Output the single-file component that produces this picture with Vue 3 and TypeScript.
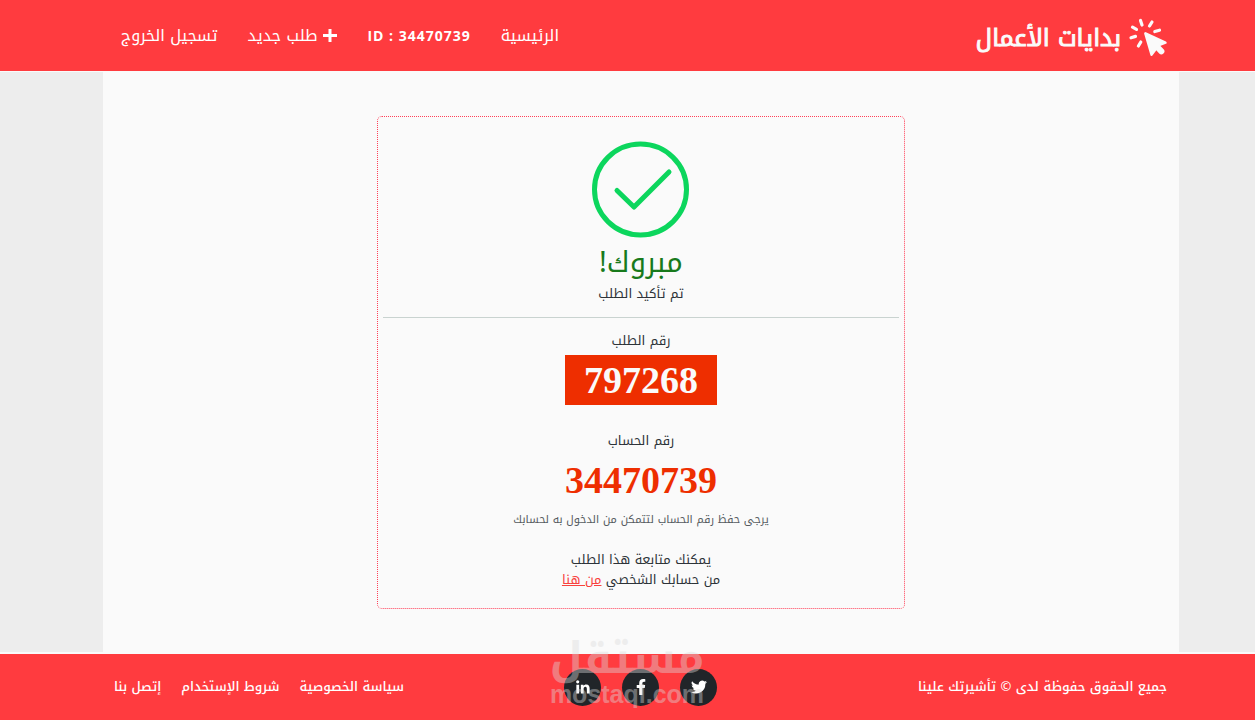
<script setup lang="ts">
interface NavLink {
  label: string
  plus?: boolean
  latin?: boolean
}

const navLinks: NavLink[] = [
  { label: 'الرئيسية' },
  { label: 'ID : 34470739', latin: true },
  { label: 'طلب جديد', plus: true },
  { label: 'تسجيل الخروج' },
]

const footerLinks: string[] = ['سياسة الخصوصية', 'شروط الإستخدام', 'إتصل بنا']

const orderNumber = '797268'
const accountNumber = '34470739'
</script>

<template>
  <div class="page" dir="rtl">
    <header class="header">
      <a class="brand" href="#">
        <svg class="brand-icon" viewBox="0 0 40 40" aria-hidden="true">
          <path
            d="M12.5 2.5L14 7M24 4L21.5 8M31.5 12.2L26.8 13.5M4.5 9.2L8.5 11.4M3 19.8L7.5 18.4M12.8 24L10.4 28"
            fill="none"
            stroke="#fafafa"
            stroke-width="3.2"
            stroke-linecap="round"
          />
          <path
            d="M17.4 15.4L37.4 24.6L30.4 27.4L23.6 36.6Z"
            fill="#fafafa"
            stroke="#fafafa"
            stroke-width="2.6"
            stroke-linejoin="round"
          />
          <path d="M27 26.5L33.4 33.4" stroke="#fafafa" stroke-width="6" stroke-linecap="round" />
        </svg>
        <span class="brand-name">بدايات الأعمال</span>
      </a>
      <nav class="nav">
        <a v-for="link in navLinks" :key="link.label" class="nav-link" :class="{ latin: link.latin }" href="#">
          <svg v-if="link.plus" class="plus" viewBox="0 0 14 14" aria-hidden="true">
            <path d="M7 0v13M0 6.500h14" stroke="#fff" stroke-width="3" />
          </svg>
          <bdi>{{ link.label }}</bdi>
        </a>
      </nav>
    </header>

    <main class="main">
      <section class="card">
        <svg class="check" viewBox="0 0 98 98" aria-hidden="true">
          <ellipse cx="48.5" cy="48.5" rx="46" ry="45.4" fill="none" stroke="#0cd65d" stroke-width="5" />
          <path
            d="M25 49.5L42 66L77 31"
            fill="none"
            stroke="#0cd65d"
            stroke-width="5"
            stroke-linecap="round"
            stroke-linejoin="round"
          />
        </svg>
        <h1 class="title">مبروك!</h1>
        <p class="text">تم تأكيد الطلب</p>
        <hr class="rule" />
        <p class="text">رقم الطلب</p>
        <strong class="number badge">{{ orderNumber }}</strong>
        <p class="text">رقم الحساب</p>
        <strong class="number account">{{ accountNumber }}</strong>
        <p class="note">يرجى حفظ رقم الحساب لتتمكن من الدخول به لحسابك</p>
        <p class="text follow">
          يمكنك متابعة هذا الطلب<br />
          من حسابك الشخصي <a class="here" href="#">من هنا</a>
        </p>
      </section>
    </main>

    <footer class="footer">
      <p class="rights">جميع الحقوق حفوظة لدى © تأشيرتك علينا</p>
      <div class="social">
        <a class="social-link" href="#" aria-label="Twitter">
          <svg viewBox="0 0 24 24" width="16" height="16">
            <path
              fill="#fff"
              d="M24 4.6a10 10 0 0 1-2.8.8 5 5 0 0 0 2.1-2.7 10 10 0 0 1-3.1 1.2 4.9 4.9 0 0 0-8.4 4.5A14 14 0 0 1 1.7 3.2a4.9 4.9 0 0 0 1.5 6.6 4.9 4.9 0 0 1-2.2-.6 4.9 4.9 0 0 0 3.9 4.9 5 5 0 0 1-2.2.1 4.9 4.9 0 0 0 4.6 3.4A9.9 9.9 0 0 1 0 19.5a14 14 0 0 0 21.5-12.4A10 10 0 0 0 24 4.6z"
            />
          </svg>
        </a>
        <a class="social-link" href="#" aria-label="Facebook">
          <svg viewBox="0 0 320 512" width="18" height="16">
            <path
              fill="#fff"
              d="M279 288l14-93h-89v-60c0-25 12-50 52-50h41V7s-37-7-72-7c-73 0-121 44-121 125v70H23v93h81v224h100V288z"
            />
          </svg>
        </a>
        <a class="social-link" href="#" aria-label="LinkedIn">
          <svg viewBox="0 0 24 24" width="14" height="14">
            <circle cx="2.9" cy="3.2" r="2.7" fill="#fff" />
            <path
              fill="#fff"
              d="M.6 8h4.8v15H.6zM8.3 8h4.5v2.1c.9-1.5 2.5-2.5 4.7-2.5 4.6 0 5.9 2.9 5.9 7.2V23h-4.8v-7.4c0-2.2-.4-3.9-2.5-3.9-2.2 0-3 1.6-3 3.9V23H8.3z"
            />
          </svg>
        </a>
        <div class="watermark" aria-hidden="true">
          <span class="mark-ar">مستقل</span>
          <span class="mark-en" dir="ltr">mostaql.com</span>
        </div>
      </div>
      <nav class="footer-nav">
        <a v-for="label in footerLinks" :key="label" class="footer-link" href="#">{{ label }}</a>
      </nav>
    </footer>
  </div>
</template>

<style>
body {
  margin: 0;
  background: #fafafa;
}
</style>

<style scoped>
.page {
  display: flex;
  flex-direction: column;
  min-height: 100vh;
  background: #fafafa;
  color: #2d3338;
  font-family: 'Noto Kufi Arabic', 'Droid Arabic Kufi', 'Noto Sans', 'Noto Sans Arabic', 'DejaVu Sans', sans-serif;
  font-size: 13px;
}

a {
  color: inherit;
  text-decoration: none;
}

p,
h1 {
  margin: 0;
}

.header,
.footer {
  display: flex;
  align-items: center;
  justify-content: space-between;
  box-sizing: border-box;
  background: #ff3b3f;
  color: #fff;
}

.header {
  height: 71px;
  padding: 4px 87px 0 121px;
}

.brand {
  display: flex;
  align-items: center;
  gap: 7px;
}

.brand-icon {
  width: 40px;
  height: 40px;
}

.brand-name {
  color: #fafafa;
  font-size: 24px;
  font-weight: 400;
  -webkit-text-stroke: 1px #fafafa;
}

.nav {
  display: flex;
  gap: 30px;
  padding-bottom: 4px;
}

.nav-link {
  display: flex;
  align-items: center;
  gap: 6px;
  font-size: 16px;
}

.latin {
  font-family: 'Open Sans', sans-serif;
  font-size: 14px;
  font-weight: 700;
  letter-spacing: 1px;
}

.plus {
  width: 14px;
  height: 14px;
}

.main {
  display: flex;
  flex: 1;
  align-items: flex-start;
  justify-content: center;
  margin: 1px 0 2px;
  padding-top: 44px;
  border: 0 solid #ededed;
  border-right-width: 76px;
  border-left-width: 103px;
}

.card {
  display: flex;
  flex-direction: column;
  align-items: center;
  box-sizing: border-box;
  width: 49%;
  padding: 24px 5px 18px;
  border: 1px dotted #ff4058;
  border-radius: 5px;
  text-align: center;
}

.check {
  width: 98px;
  height: 98px;
}

.title {
  padding-top: 2px;
  color: #187a1c;
  font-size: 29px;
  font-weight: 400;
  line-height: 43px;
}

.text {
  line-height: 20px;
}

.rule {
  width: 100%;
  height: 1px;
  margin: 13px 0;
  border: 0;
  background: #c9d3d0;
}

.number {
  font-family: 'Liberation Serif', serif;
  font-size: 38px;
  line-height: 50px;
}

.badge {
  margin: 4px 0 26px;
  padding: 0 19px;
  background: #ee2e00;
  color: #fafafa;
}

.account {
  margin-top: 4px;
  color: #ee2e00;
}

.note {
  margin: 5px 0 20px;
  color: #555b60;
  font-size: 11px;
  line-height: 20px;
}

.here {
  color: #f8413c;
  text-decoration: underline;
}

.footer {
  display: grid;
  grid-template-columns: 1fr auto 1fr;
  height: 66px;
  padding: 0 88px 0 114px;
}

.social {
  position: relative;
  display: flex;
  gap: 21px;
}

.social-link {
  display: flex;
  align-items: center;
  justify-content: center;
  width: 37px;
  height: 37px;
  border-radius: 50%;
  background: #212529;
}

.footer-nav {
  display: flex;
  justify-content: flex-end;
  gap: 20px;
}

.rights,
.footer-link {
  padding-bottom: 2px;
  font-weight: 500;
}

.watermark {
  position: absolute;
  bottom: -1px;
  left: -13px;
  display: flex;
  flex-direction: column;
  align-items: center;
  width: 152px;
  color: #dcdcdc;
  font-weight: 700;
  opacity: 0.4;
  pointer-events: none;
}

.mark-ar {
  font-size: 43px;
  line-height: 44px;
}

.mark-en {
  font-family: 'Liberation Sans', sans-serif;
  font-size: 25px;
  line-height: 26px;
}
</style>
